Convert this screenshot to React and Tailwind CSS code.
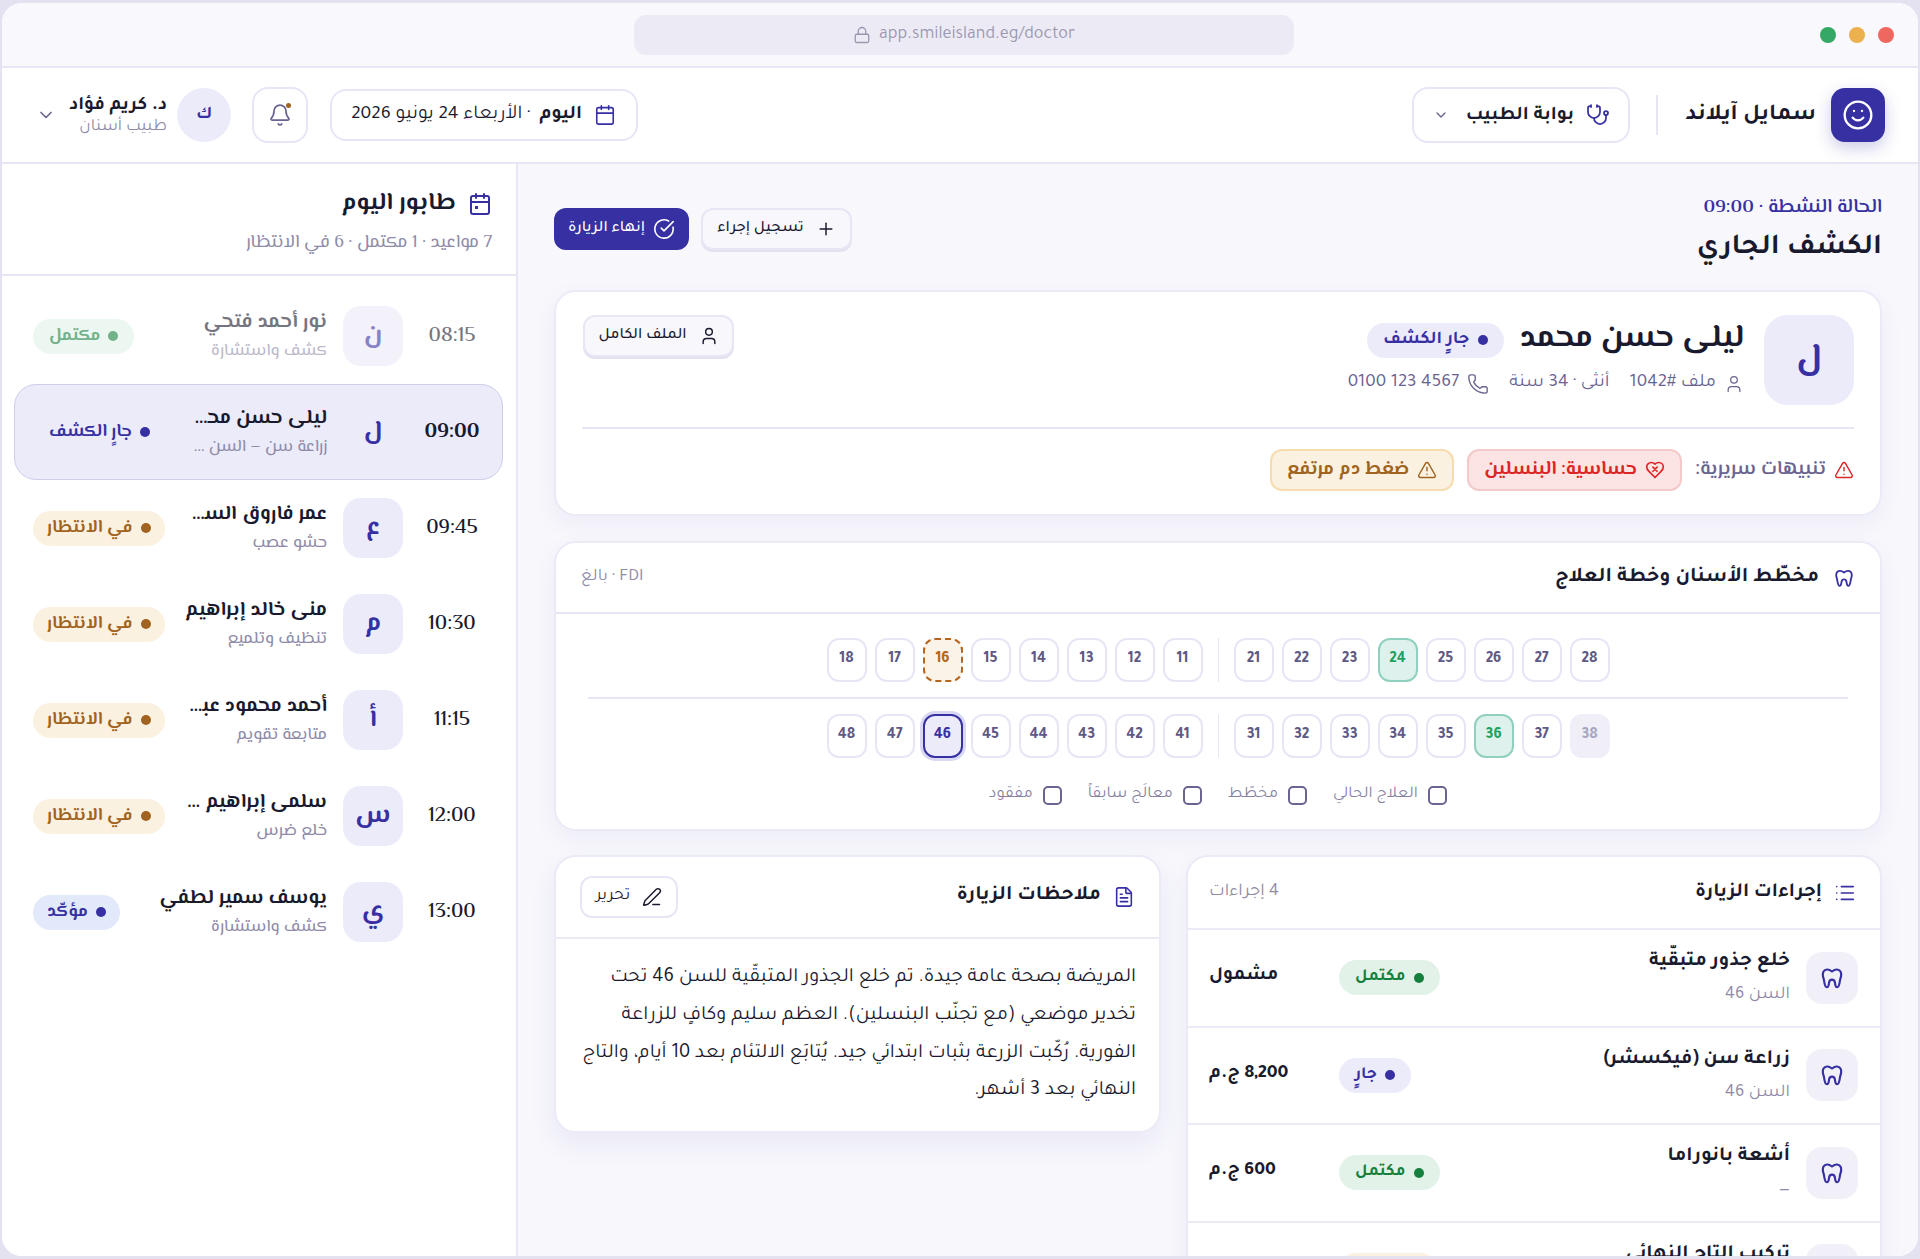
import React from 'react';
import { Smile, Stethoscope, ChevronDown, Calendar, Bell, Lock, Plus, CircleCheckBig, User, Phone, TriangleAlert, FileText, PenLine, List } from 'lucide-react';

const ToothIcon = ({ className }) => (
  <svg viewBox="0 0 24 24" fill="none" stroke="currentColor" strokeWidth="2" strokeLinecap="round" strokeLinejoin="round" className={className}>
    <path d="M12 6c-1.600-1.200-3.200-2-4.800-1.800C4.800 4.500 3.500 6.500 3.500 9c0 2 .8 3.200 1.100 5 .4 2.300.7 6.500 2.700 6.500 1.800 0 1.700-3 2.100-4.700.3-1.300 1.100-2.300 2.600-2.300s2.300 1 2.600 2.300c.4 1.700.3 4.700 2.100 4.700 2 0 2.300-4.200 2.700-6.500.3-1.800 1.100-3 1.100-5 0-2.500-1.300-4.500-3.700-4.800C15.200 4 13.600 4.800 12 6z" />
  </svg>
);

const HeartX = ({ className }) => (
  <svg viewBox="0 0 24 24" fill="none" stroke="currentColor" strokeWidth="2" strokeLinecap="round" strokeLinejoin="round" className={className}>
    <path d="M19 14c1.500-1.500 3-3.200 3-5.500A5.500 5.500 0 0 0 16.500 3c-1.800 0-3 .5-4.500 2-1.500-1.500-2.700-2-4.500-2A5.500 5.500 0 0 0 2 8.500c0 2.300 1.500 4 3 5.500l7 7z" />
    <path d="M9.500 8.500l5 5M14.500 8.500l-5 5" />
  </svg>
);

const CalendarDot = ({ className }) => (
  <svg viewBox="0 0 24 24" fill="none" stroke="currentColor" strokeWidth="2" strokeLinecap="round" strokeLinejoin="round" className={className}>
    <path d="M8 2v4M16 2v4" />
    <rect x="3" y="4" width="18" height="18" rx="2" />
    <path d="M3 10h18" />
    <rect x="7" y="14" width="3" height="3" fill="currentColor" stroke="none" />
  </svg>
);

const badgeStyles = {
  done: 'px-[16px] bg-[#e2f2e8] text-[#15803d]',
  doing: 'px-[16px] bg-[#ecebfa] text-[#3730a3]',
  wait: 'px-[14px] bg-[#fbf1e0] text-[#a16420]',
  ok: 'px-[14px] bg-[#e1e9fa] text-[#3730a3]',
};

const dotStyles = {
  done: 'bg-[#15803d]',
  doing: 'bg-[#3730a3]',
  wait: 'bg-[#a16420]',
  ok: 'bg-[#3730a3]',
};

const StatusBadge = ({ kind, label, className = '' }) => (
  <span className={`shrink-0 inline-flex items-center gap-2 h-[35px] rounded-full font-bold whitespace-nowrap ${badgeStyles[kind]} ${className}`}>
    <span className={`w-[10px] h-[10px] rounded-full ${dotStyles[kind]}`}></span>
    {label}
  </span>
);

const queue = [
  { time: '08:15', letter: 'ن', name: 'نور أحمد فتحي', sub: 'كشف واستشارة', kind: 'done', label: 'مكتمل', faded: true },
  { time: '09:00', letter: 'ل', name: 'ليلى حسن محمد', sub: 'زراعة سن – السن 46', kind: 'doing', label: 'جارٍ الكشف', active: true },
  { time: '09:45', letter: 'ع', name: 'عمر فاروق السعيد', sub: 'حشو عصب', kind: 'wait', label: 'في الانتظار' },
  { time: '10:30', letter: 'م', name: 'منى خالد إبراهيم', sub: 'تنظيف وتلميع', kind: 'wait', label: 'في الانتظار' },
  { time: '11:15', letter: 'أ', name: 'أحمد محمود عبدالله', sub: 'متابعة تقويم', kind: 'wait', label: 'في الانتظار' },
  { time: '12:00', letter: 'س', name: 'سلمى إبراهيم حسن', sub: 'خلع ضرس', kind: 'wait', label: 'في الانتظار' },
  { time: '13:00', letter: 'ي', name: 'يوسف سمير لطفي', sub: 'كشف واستشارة', kind: 'ok', label: 'مؤكّد' },
];

const toothTone = {
  plain: 'border-[#e8e6f5] text-[#5f5985]',
  green: 'border-[#8fd0bf] bg-[#dff1ec] text-[#1fa25f]',
  planned: 'border-dashed border-[#b5651d] bg-[#f9f3e8] text-[#b5651d]',
  current: 'border-[#3730a3] bg-[#ecebfa] text-[#3730a3] shadow-[0_0_0_3px_#d9d8f2]',
  missing: 'border-[#f0eff8] bg-[#f0eff8] text-[#a9a6c0]',
};

const Tooth = ({ n, tone = 'plain' }) => (
  <div className={`w-10 h-11 shrink-0 flex items-center justify-center rounded-xl border-2 text-[16px] font-bold ${toothTone[tone]}`}>{n}</div>
);

const upperRight = [[18], [17], [16, 'planned'], [15], [14], [13], [12], [11]];
const upperLeft = [[21], [22], [23], [24, 'green'], [25], [26], [27], [28]];
const lowerRight = [[48], [47], [46, 'current'], [45], [44], [43], [42], [41]];
const lowerLeft = [[31], [32], [33], [34], [35], [36, 'green'], [37], [38, 'missing']];

const ToothRow = ({ left, right }) => (
  <div className="flex items-stretch justify-center gap-[15px]" dir="ltr">
    <div className="flex gap-2">{left.map(([n, t]) => <Tooth key={n} n={n} tone={t} />)}</div>
    <div className="w-[1px] bg-[#e8e6f5]"></div>
    <div className="flex gap-2">{right.map(([n, t]) => <Tooth key={n} n={n} tone={t} />)}</div>
  </div>
);

const procedures = [
  { title: 'خلع جذور متبقّية', sub: 'السن 46', kind: 'done', label: 'مكتمل', price: 'مشمول' },
  { title: 'زراعة سن (فيكسشر)', sub: 'السن 46', kind: 'doing', label: 'جارٍ', price: '8,200 ج.م' },
  { title: 'أشعة بانوراما', sub: '—', kind: 'done', label: 'مكتمل', price: '600 ج.م' },
  { title: 'تركيب التاج النهائي', sub: 'السن 46', kind: 'wait', label: 'مخطط', price: '—' },
];

const SoftButton = ({ icon: Icon, label, className = '' }) => (
  <button className={`flex items-center justify-center gap-3 h-[42px] rounded-xl border-2 border-[#e8e6f5] bg-[#f7f7fc] text-[#1a1a2e] text-[16px] font-medium shadow-[0_2px_0_#e3e1ef] ${className}`}>
    <Icon className="w-5 h-5" strokeWidth={1.75} />
    {label}
  </button>
);

export default function App() {
  return (
    <div dir="rtl" className="h-screen overflow-hidden bg-[#e4e2f0] pt-[3px] pb-[3px] px-[2px] text-[#1a1a2e] font-['Tajawal','Noto_Sans',sans-serif]">
      <div className="h-full rounded-[20px] overflow-hidden bg-white flex flex-col">
        {/* Browser chrome */}
        <div className="h-[65px] shrink-0 bg-[#f9f8fc] border-b-2 border-[#e8e6f5] flex items-center justify-between px-6 relative">
          <div className="flex items-center gap-[13px]">
            <span className="w-4 h-4 rounded-full bg-[#f0675f]"></span>
            <span className="w-4 h-4 rounded-full bg-[#ecb04f]"></span>
            <span className="w-4 h-4 rounded-full bg-[#34a864]"></span>
          </div>
          <div className="absolute left-[632px] top-[12px] w-[660px] h-10 rounded-xl bg-[#ecebf5] flex items-center justify-center gap-2 text-[18px] text-[#9a97b0]" dir="ltr">
            <Lock className="w-[18px] h-[18px]" strokeWidth={1.75} />
            <span>app.smileisland.eg/doctor</span>
          </div>
        </div>

        {/* Top header */}
        <header className="h-[96px] shrink-0 border-b-2 border-[#e8e6f5] flex items-center justify-between pr-[33px] pl-[34px]">
          <div className="flex items-center">
            <div className="w-[54px] h-[54px] rounded-[14px] bg-[#3730a3] text-white flex items-center justify-center shadow-[0_6px_16px_rgba(55,48,163,0.25)]">
              <Smile className="w-8 h-8" strokeWidth={1.75} />
            </div>
            <span className="w-[130px] mr-[15px] pt-[2px] text-[23px] font-bold whitespace-nowrap">سمايل آيلاند</span>
            <div className="w-[2px] h-10 bg-[#e8e6f5] mr-[28px] ml-[26px]"></div>
            <button className="w-[218px] h-[56px] rounded-2xl border-2 border-[#e8e6f5] flex items-center gap-3 pr-[18px] pl-[19px] text-[19.500px] font-bold">
              <Stethoscope className="w-6 h-6 text-[#3730a3]" strokeWidth={1.75} />
              <span className="pt-[3px]">بوابة الطبيب</span>
              <ChevronDown className="w-4 h-4 text-[#6b6490] mr-auto" />
            </button>
          </div>
          <div className="flex items-center">
            <div className="w-[308px] h-[52px] rounded-2xl border-2 border-[#e8e6f5] flex items-center gap-3 pr-5 pl-[10px] text-[19.500px]">
              <Calendar className="w-[22px] h-[22px] text-[#3730a3]" strokeWidth={1.75} />
              <span className="font-bold -ml-[3px] pt-[2px]">اليوم</span>
              <span className="whitespace-nowrap pt-[2px]">· الأربعاء 24 يونيو 2026</span>
            </div>
            <div className="w-14 h-14 mr-[22px] rounded-2xl border-2 border-[#e8e6f5] flex items-center justify-center relative text-[#6b6490]">
              <Bell className="w-6 h-6" strokeWidth={1.75} />
              <span className="absolute top-[14px] right-[15px] w-[5px] h-[5px] rounded-full bg-[#a16420]"></span>
            </div>
            <div className="w-[54px] h-[54px] mr-[21px] rounded-full bg-[#ecebfa] text-[#3730a3] flex items-center justify-center text-lg font-bold">ك</div>
            <div className="w-[89px] mr-[10px] pt-[3px] flex flex-col items-start">
              <span className="text-[19px] font-bold leading-[22px] whitespace-nowrap">د. كريم فؤاد</span>
              <span className="text-[17px] text-[#8f8ba8] leading-[20px] whitespace-nowrap">طبيب أسنان</span>
            </div>
            <ChevronDown className="w-5 h-5 mr-[22px] text-[#6b6490]" />
          </div>
        </header>

        <div className="flex-1 min-h-0 flex">
          {/* Main column */}
          <main className="flex-1 min-w-0 bg-[#f7f7fc] px-[36px] pt-[30px]">
            <div className="flex items-start justify-between mb-[14px]">
              <div>
                <div className="font-['El_Messiri',sans-serif] text-[19.500px] font-semibold text-[#3730a3] leading-[26px] pt-[1px]">الحالة النشطة · 09:00</div>
                <h1 className="text-[29px] font-bold leading-[55px]">الكشف الجاري</h1>
              </div>
              <div className="flex gap-3 mt-[14px]">
                <SoftButton icon={Plus} label="تسجيل إجراء" className="w-[151px]" />
                <button className="flex items-center justify-center gap-2 w-[135px] h-[42px] rounded-xl bg-[#3730a3] text-white text-[16px] font-medium">
                  <CircleCheckBig className="w-[22px] h-[22px]" strokeWidth={1.75} />
                  إنهاء الزيارة
                </button>
              </div>
            </div>

            {/* Patient card */}
            <section className="h-[226px] bg-white rounded-[22px] border-2 border-[#eceaf6] shadow-[0_8px_24px_rgba(55,48,163,0.05)] px-[26px] pt-[23px]">
              <div className="flex items-start h-[90px]">
                <div className="font-['El_Messiri',sans-serif] w-[90px] h-[90px] shrink-0 rounded-3xl bg-[#ecebfa] text-[#3730a3] flex items-center justify-center text-[36px] font-bold">ل</div>
                <div className="mr-[20px]">
                  <div className="flex items-center gap-4 h-[50px]">
                    <h2 className="font-['El_Messiri',sans-serif] text-[31.500px] font-bold leading-[40px] pb-[3px]">ليلى حسن محمد</h2>
                    <StatusBadge kind="doing" label="جارٍ الكشف" className="text-[18px]" />
                  </div>
                  <div className="flex items-center gap-5 text-[19px] text-[#6b6490] mt-[5px]">
                    <span className="flex items-center gap-2"><User className="w-5 h-5" strokeWidth={1.5} />ملف #1042</span>
                    <span>أنثى · 34 سنة</span>
                    <span className="flex items-center gap-2"><Phone className="w-[22px] h-[22px]" strokeWidth={1.5} /><span dir="ltr">0100 123 4567</span></span>
                  </div>
                </div>
                <SoftButton icon={User} label="الملف الكامل" className="w-[151px] mr-auto ml-[1px]" />
              </div>
              <div className="h-[2px] bg-[#e8e6f5] mt-[22px]"></div>
              <div className="flex items-center gap-[13px] mt-[20px] font-['El_Messiri',sans-serif]">
                <TriangleAlert className="w-5 h-5 text-[#dc2626]" strokeWidth={1.75} />
                <span className="text-[20px] font-semibold text-[#6b6490] -mr-[5px]">تنبيهات سريرية:</span>
                <span className="flex items-center gap-2 h-[42px] px-[15px] rounded-xl border-2 border-[#f3c9c9] bg-[#fce4e4] text-[#dc2626] text-[19px] font-bold">
                  <HeartX className="w-5 h-5" />حساسية: البنسلين
                </span>
                <span className="flex items-center gap-2 h-[42px] px-[15px] rounded-xl border-2 border-[#f6dcae] bg-[#fbf1e0] text-[#a16420] text-[19px] font-bold">
                  <TriangleAlert className="w-5 h-5" strokeWidth={1.75} />ضغط دم مرتفع
                </span>
              </div>
            </section>

            {/* Dental chart */}
            <section className="mt-[25px] h-[290px] bg-white rounded-[22px] border-2 border-[#eceaf6] shadow-[0_8px_24px_rgba(55,48,163,0.05)]">
              <div className="h-[71px] border-b-2 border-[#e8e6f5] flex items-center justify-between px-[25px]">
                <div className="flex items-center gap-[14px]">
                  <ToothIcon className="w-[22px] h-[22px] text-[#3730a3]" />
                  <h3 className="text-[21px] font-bold">مخطّط الأسنان وخطة العلاج</h3>
                </div>
                <span className="text-[17.500px] text-[#8f8ba8] pt-[2px]">FDI · بالغ</span>
              </div>
              <div className="pt-6 px-[32px]">
                <ToothRow left={upperRight} right={upperLeft} />
                <div className="h-[2px] bg-[#e8e6f5] my-[15px]"></div>
                <ToothRow left={lowerRight} right={lowerLeft} />
                <div className="flex justify-center gap-[26px] mt-[25px] text-[16.500px] text-[#85819f]">
                  {['العلاج الحالي', 'مخطّط', 'معالَج سابقاً', 'مفقود'].map((t) => (
                    <label key={t} className="flex items-center gap-[10px]">
                      <span className="w-[19px] h-[19px] rounded-[5px] border-2 border-[#6b6490]"></span>{t}
                    </label>
                  ))}
                </div>
              </div>
            </section>

            {/* Procedures + notes */}
            <div className="mt-[24px] grid grid-cols-[696px_1fr] gap-[25px] items-start">
              <section className="bg-white rounded-[22px] border-2 border-[#eceaf6] shadow-[0_8px_24px_rgba(55,48,163,0.05)]">
                <div className="h-[73px] border-b-2 border-[#eceaf6] flex items-center justify-between pr-[24px] pl-[21px]">
                  <div className="flex items-center gap-3">
                    <List className="w-[22px] h-[22px] text-[#3730a3]" strokeWidth={1.75} />
                    <h3 className="text-[20px] font-bold">إجراءات الزيارة</h3>
                  </div>
                  <span className="text-[18px] text-[#8f8ba8]">4 إجراءات</span>
                </div>
                {procedures.map((p) => (
                  <div key={p.title} className="h-[97.500px] border-b-2 border-[#eceaf6] flex items-center pr-[22px] pl-[21px] gap-4">
                    <div className="w-[52px] h-[52px] shrink-0 rounded-2xl bg-[#f1f0f9] text-[#3730a3] flex items-center justify-center">
                      <ToothIcon className="w-[26px] h-[26px]" />
                    </div>
                    <div className="flex-1">
                      <div className="text-[20.200px] font-bold leading-7">{p.title}</div>
                      <div className="text-[18px] text-[#8f8ba8] leading-6 mt-[7px]">{p.sub}</div>
                    </div>
                    <div className="w-[100px] flex justify-end"><StatusBadge kind={p.kind} label={p.label} className="text-[17px]" /></div>
                    <div className="w-[114px] text-[19.300px] font-bold text-left">{p.price}</div>
                  </div>
                ))}
              </section>

              <section className="bg-white rounded-[22px] border-2 border-[#eceaf6] shadow-[0_12px_28px_rgba(55,48,163,0.07)]">
                <div className="h-[82px] border-b-2 border-[#eceaf6] flex items-center justify-between px-[24px]">
                  <div className="flex items-center gap-3">
                    <FileText className="w-[22px] h-[22px] text-[#3730a3]" strokeWidth={1.75} />
                    <h3 className="text-[20.700px] font-bold">ملاحظات الزيارة</h3>
                  </div>
                  <button className="flex items-center gap-3 h-[42px] px-[14px] rounded-xl border-2 border-[#e8e6f5] text-[17px]">
                    <PenLine className="w-5 h-5" strokeWidth={1.75} />تحرير
                  </button>
                </div>
                <p className="pr-[23px] pl-[22px] pt-[21px] pb-[20px] text-[20.300px] leading-[37.800px]">
                  المريضة بصحة عامة جيدة. تم خلع الجذور المتبقّية للسن 46 تحت تخدير موضعي (مع تجنّب البنسلين). العظم سليم وكافٍ للزراعة الفورية. رُكّبت الزرعة بثبات ابتدائي جيد. يُتابَع الالتئام بعد 10 أيام، والتاج النهائي بعد 3 أشهر.
                </p>
              </section>
            </div>
          </main>

          {/* Queue sidebar */}
          <aside className="w-[516px] shrink-0 bg-white border-r-2 border-[#e8e6f5] font-['El_Messiri',sans-serif]">
            <div className="h-[112px] border-b-2 border-[#e8e6f5] px-6 pt-[22px]">
              <div className="flex items-center gap-3">
                <CalendarDot className="w-[24px] h-[24px] text-[#3730a3]" />
                <h2 className="text-[24px] font-bold">طابور اليوم</h2>
              </div>
              <p className="text-[18px] text-[#8f8ba8] mt-[8px]">7 مواعيد · 1 مكتمل · 6 في الانتظار</p>
            </div>
            <div className="pr-[13px] pl-[12px] pt-[12px]">
              {queue.map((q) => (
                <div key={q.time} className={`h-[96px] flex items-center gap-4 pr-[17px] pl-[18px] rounded-[22px] border ${q.active ? 'bg-[#ecebfa] border-[#cfcdea]' : 'border-transparent'} ${q.faded ? 'opacity-60' : ''}`}>
                  <span className={`w-[66px] text-center text-[21px] pt-[2px] ${q.active ? 'font-bold' : 'font-medium'}`}>{q.time}</span>
                  <div className={`w-[60px] h-[60px] shrink-0 rounded-[18px] flex items-center justify-center text-[26px] font-bold text-[#3730a3] ${q.active ? '' : 'bg-[#ecebfa]'}`}>{q.letter}</div>
                  <div className={`flex-1 min-w-0 pb-[2px] ${q.active ? 'pl-[8px]' : ''}`}>
                    <div className="text-[20px] font-bold truncate leading-[28px]">{q.name}</div>
                    <div className="text-[17px] text-[#8f8ba8] truncate leading-[22px] mt-[3px]">{q.sub}</div>
                  </div>
                  <StatusBadge kind={q.kind} label={q.label} className="text-[17.500px]" />
                </div>
              ))}
            </div>
          </aside>
        </div>
      </div>
    </div>
  );
}
